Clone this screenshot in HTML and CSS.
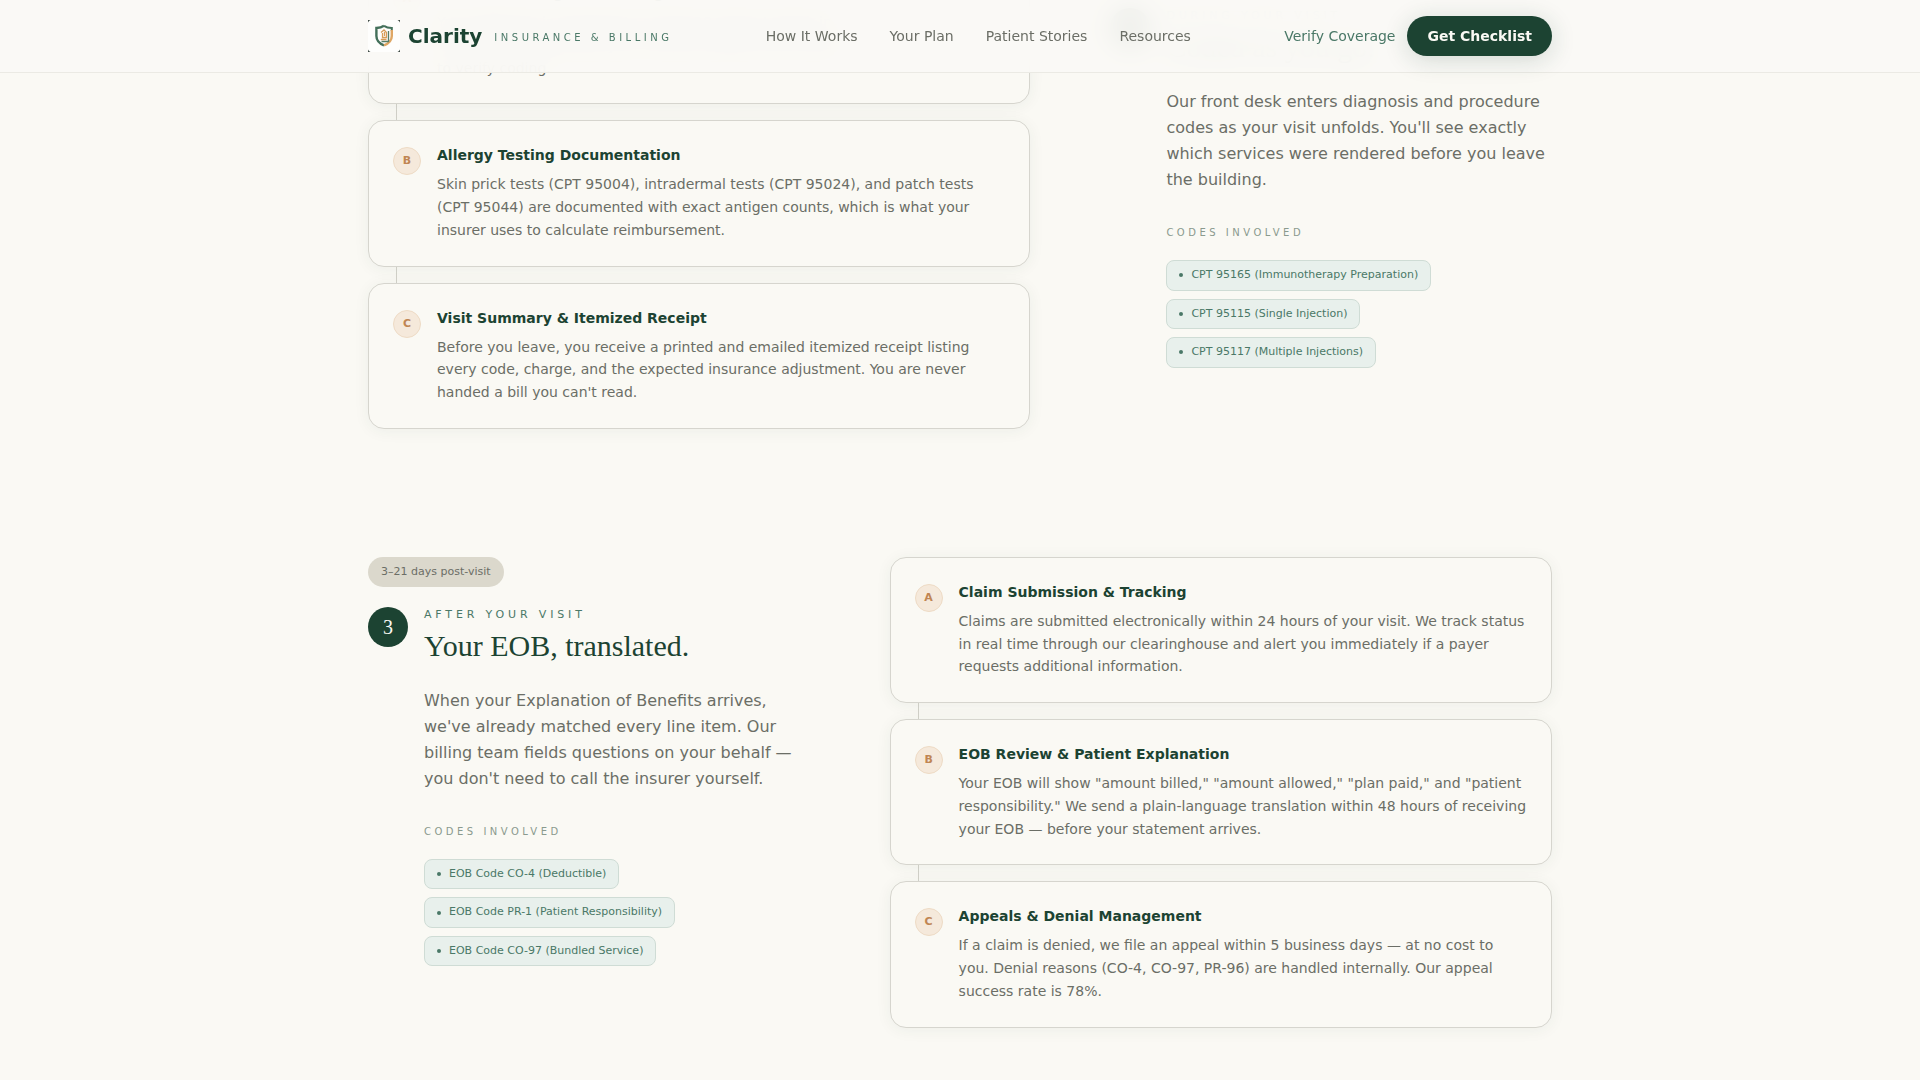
FILE: index.html
```html
<!DOCTYPE html>
<html lang="en">
<head>
    <meta charset="UTF-8">
    <meta name="viewport" content="width=device-width, initial-scale=1.0">
    <title>Clarity - Insurance &amp; Billing</title>
    <link rel="stylesheet" href="styles.css">
</head>
<body>
    <header class="site-header">
        <div class="container header-inner">
            <a class="brand" href="#">
                <svg class="brand-logo" viewBox="0 0 32 32" aria-hidden="true">
                    <rect width="32" height="32" fill="#fefefd"/>
                    <path d="M0 2.500V0H2.500L1 1zM32 2.500V0H29.500L31 1zM0 29.500V32H2.500L1 31zM32 29.500V32H29.500L31 31z" fill="#3f4b45"/>
                    <path d="M16 5.800C13.500 7.500 10.800 7.900 8.400 8V16C8.400 20.500 11 23.300 16 25.400" fill="none" stroke="#44705b" stroke-width="2.400"/>
                    <path d="M16 5.800C18.500 7.500 21.200 7.900 23.800 8V11" fill="none" stroke="#44705b" stroke-width="2"/>
                    <path d="M23.800 10V16C23.800 20.500 21 23.300 16 25.400" fill="none" stroke="#dfa765" stroke-width="2.400"/>
                    <path d="M20.500 11V21.500H13.500" fill="none" stroke="#577d68" stroke-width="1.300"/>
                    <path d="M13 12.500L16 10L18.500 12.500V17.500H14.500V13M16.500 12V16M12.800 19.500H18.500" fill="none" stroke="#d99c58" stroke-width="1.300"/>
                </svg>
                <span class="brand-name">Clarity</span>
                <span class="brand-tag">Insurance &amp; Billing</span>
            </a>
            <nav class="main-nav">
                <a href="#how">How It Works</a>
                <a href="#plan">Your Plan</a>
                <a href="#stories">Patient Stories</a>
                <a href="#resources">Resources</a>
            </nav>
            <div class="header-actions">
                <a class="verify-link" href="#verify">Verify Coverage</a>
                <button class="btn" type="button">Get Checklist</button>
            </div>
        </div>
    </header>

    <main class="container steps" id="how">
        <section class="step step-reverse">
            <div class="step-info">
                <span class="timing">Day of visit</span>
                <div class="step-row">
                    <span class="step-number">2</span>
                    <div class="step-body">
                        <p class="eyebrow">During Your Visit</p>
                        <h2>Coded as you go.</h2>
                        <p class="lead">Our front desk enters diagnosis and procedure codes as your visit unfolds. You'll see exactly which services were rendered before you leave the building.</p>
                        <h3 class="codes-title">Codes Involved</h3>
                        <ul class="codes">
                            <li>CPT 95165 (Immunotherapy Preparation)</li>
                            <li>CPT 95115 (Single Injection)</li>
                            <li>CPT 95117 (Multiple Injections)</li>
                        </ul>
                    </div>
                </div>
            </div>
            <div class="cards">
                <article class="card">
                    <span class="letter">A</span>
                    <div>
                        <h3>Check-In &amp; Diagnosis Coding</h3>
                        <p>Your diagnosis is matched to an ICD-10 code at check-in.<br>The code is shared with your clinician ahead of the exam<br>to verify coding.</p>
                    </div>
                </article>
                <article class="card">
                    <span class="letter">B</span>
                    <div>
                        <h3>Allergy Testing Documentation</h3>
                        <p>Skin prick tests (CPT 95004), intradermal tests (CPT 95024), and patch tests (CPT 95044) are documented with exact antigen counts, which is what your insurer uses to calculate reimbursement.</p>
                    </div>
                </article>
                <article class="card">
                    <span class="letter">C</span>
                    <div>
                        <h3>Visit Summary &amp; Itemized Receipt</h3>
                        <p>Before you leave, you receive a printed and emailed itemized receipt listing every code, charge, and the expected insurance adjustment. You are never handed a bill you can't read.</p>
                    </div>
                </article>
            </div>
        </section>

        <section class="step">
            <div class="step-info">
                <span class="timing">3–21 days post-visit</span>
                <div class="step-row">
                    <span class="step-number">3</span>
                    <div class="step-body">
                        <p class="eyebrow">After Your Visit</p>
                        <h2>Your EOB, translated.</h2>
                        <p class="lead">When your Explanation of Benefits arrives, we've already matched every line item. Our billing team fields questions on your behalf — you don't need to call the insurer yourself.</p>
                        <h3 class="codes-title">Codes Involved</h3>
                        <ul class="codes">
                            <li>EOB Code CO-4 (Deductible)</li>
                            <li>EOB Code PR-1 (Patient Responsibility)</li>
                            <li>EOB Code CO-97 (Bundled Service)</li>
                        </ul>
                    </div>
                </div>
            </div>
            <div class="cards">
                <article class="card">
                    <span class="letter">A</span>
                    <div>
                        <h3>Claim Submission &amp; Tracking</h3>
                        <p>Claims are submitted electronically within 24 hours of your visit. We track status in real time through our clearinghouse and alert you immediately if a payer requests additional information.</p>
                    </div>
                </article>
                <article class="card">
                    <span class="letter">B</span>
                    <div>
                        <h3>EOB Review &amp; Patient Explanation</h3>
                        <p>Your EOB will show "amount billed," "amount allowed," "plan paid," and "patient responsibility." We send a plain-language translation within 48 hours of receiving your EOB — before your statement arrives.</p>
                    </div>
                </article>
                <article class="card">
                    <span class="letter">C</span>
                    <div>
                        <h3>Appeals &amp; Denial Management</h3>
                        <p>If a claim is denied, we file an appeal within 5 business days — at no cost to you. Denial reasons (CO-4, CO-97, PR-96) are handled internally. Our appeal success rate is 78%.</p>
                    </div>
                </article>
            </div>
        </section>
    </main>
</body>
</html>
```
FILE: styles.css
```css
* {
    box-sizing: border-box;
    margin: 0;
    padding: 0;
}
body {
    font-family: "DejaVu Sans", sans-serif;
    font-size: 14px;
    color: #6b6e66;
    background: #faf9f4;
}
a {
    color: inherit;
    text-decoration: none;
}
.container {
    max-width: 1280px;
    margin: 0 auto;
    padding: 0 48px;
}

/* header */
.site-header {
    position: fixed;
    top: 0;
    left: 0;
    right: 0;
    z-index: 10;
    background: rgba(250, 249, 245, 0.95);
    border-bottom: 1px solid #ebeae4;
    backdrop-filter: blur(12px);
}
.header-inner {
    display: flex;
    align-items: center;
    justify-content: space-between;
    height: 72px;
}
.brand {
    display: flex;
    align-items: center;
}
.brand-logo {
    width: 32px;
    height: 32px;
    margin-right: 8px;
}
.brand-name {
    font-size: 20px;
    font-weight: bold;
    color: #1c4332;
    margin-right: 12px;
}
.brand-tag {
    padding-top: 2px;
    font-size: 10px;
    letter-spacing: 0.35em;
    text-transform: uppercase;
    color: #4a7867;
}
.main-nav {
    display: flex;
    gap: 32px;
}
.header-actions {
    display: flex;
    align-items: center;
    gap: 12px;
}
.verify-link {
    color: #4a7867;
}
.btn {
    height: 40px;
    padding: 0 20px;
    border: none;
    border-radius: 20px;
    background: #1c4332;
    color: #faf9f4;
    font-family: inherit;
    font-size: 14px;
    font-weight: bold;
    cursor: pointer;
    box-shadow: 0 4px 24px rgba(28, 67, 50, 0.18);
}

/* steps */
.steps {
    display: flex;
    flex-direction: column;
    gap: 128px;
    margin-top: -42px;
    padding-bottom: 48px;
}
.step {
    display: grid;
    grid-template-columns: 2fr 3fr;
    gap: 80px;
    align-items: start;
}
.step-reverse {
    grid-template-columns: 3fr 2fr;
}
.step-reverse .step-info {
    order: 2;
}
.timing {
    display: inline-block;
    padding: 0 13px;
    border-radius: 15px;
    background: #dbd8cc;
    font-size: 11px;
    line-height: 30px;
}
.step-row {
    display: flex;
    gap: 16px;
    margin-top: 20px;
}
.step-number {
    flex: none;
    width: 40px;
    height: 40px;
    border-radius: 50%;
    background: #1c4332;
    color: #faf9f4;
    font-family: "Liberation Serif", serif;
    font-size: 20px;
    line-height: 40px;
    text-align: center;
}
.eyebrow {
    font-size: 11px;
    line-height: 16px;
    letter-spacing: 0.35em;
    text-transform: uppercase;
    color: #4a7867;
}
.step-body h2 {
    margin: 3px 0 22px;
    font-family: "Liberation Serif", serif;
    font-size: 30px;
    font-weight: normal;
    line-height: 40px;
    color: #1c4332;
}
.lead {
    font-size: 16px;
    line-height: 26px;
}
.codes-title {
    margin: 32px 0 19px;
    font-size: 10px;
    font-weight: normal;
    line-height: 16px;
    letter-spacing: 0.35em;
    text-transform: uppercase;
    color: #8a9a8e;
}
.codes {
    display: flex;
    flex-direction: column;
    align-items: flex-start;
    gap: 8px;
    list-style: none;
}
.codes li {
    display: flex;
    align-items: center;
    gap: 8px;
    padding: 6px 12px;
    border: 1px solid #cfdcd5;
    border-radius: 8px;
    background: #e8f0ec;
    color: #4a7867;
    font-size: 11px;
    line-height: 1.5;
}
.codes li::before {
    content: "";
    width: 4px;
    height: 4px;
    border-radius: 50%;
    background: #4a7867;
}

/* cards */
.cards {
    position: relative;
    display: flex;
    flex-direction: column;
    gap: 16px;
}
.cards::before {
    content: "";
    position: absolute;
    top: 24px;
    bottom: 24px;
    left: 28px;
    width: 1px;
    background: #d3d2ca;
}
.card {
    position: relative;
    display: flex;
    gap: 16px;
    padding: 24px;
    border: 1px solid #d6d5ce;
    border-radius: 16px;
    background: #faf9f4;
    box-shadow: 0 2px 16px rgba(28, 67, 50, 0.06);
}
.letter {
    flex: none;
    width: 28px;
    height: 28px;
    margin-top: 2px;
    border: 1px solid #eedbc5;
    border-radius: 50%;
    background: #f5e9db;
    color: #c08552;
    font-size: 11px;
    font-weight: bold;
    line-height: 26px;
    text-align: center;
}
.card h3 {
    margin-bottom: 8px;
    font-size: 14px;
    line-height: 20px;
    color: #1c4332;
}
.card p {
    line-height: 1.625;
}
```
